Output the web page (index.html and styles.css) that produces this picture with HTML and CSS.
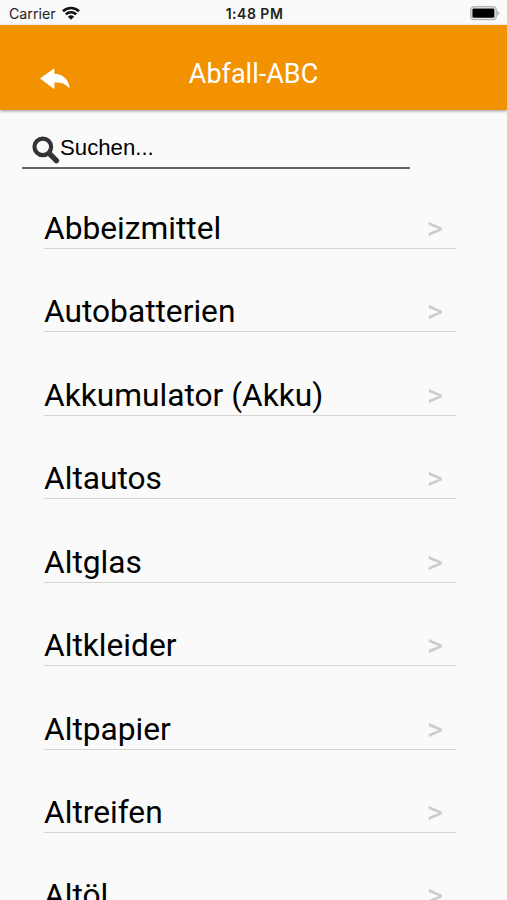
FILE: index.html
```
<!DOCTYPE html>
<html lang="de">
<head>
  <meta charset="UTF-8" />
  <meta name="viewport" content="width=device-width, initial-scale=1.0" />
  <title>Abfall-ABC</title>
  <link rel="stylesheet" href="styles.css">
</head>
<body>
  <div class="statusbar">
    <div class="carrier">
      <span>Carrier</span>
      <svg class="wifi" width="18" height="14" viewBox="0 0 18 14">
        <path d="M1 5.2a11.6 11.6 0 0 1 16 0M3.8 8.4a7.5 7.5 0 0 1 10.4 0" fill="none" stroke="#111" stroke-width="2.6" />
        <path d="M9 13.8L5.9 10.7a4.6 4.6 0 0 1 6.2 0z" fill="#111" />
      </svg>
    </div>
    <span class="time">1:48 PM</span>
    <svg class="battery" width="31" height="15" viewBox="0 0 31 15">
      <rect x="1.8" y="0.8" width="25.4" height="12.8" rx="3.4" fill="#fafafa" stroke="#b5b5b5" stroke-width="1.5" />
      <rect x="3.4" y="2.6" width="22" height="9.2" rx="1.2" fill="#000" />
      <path d="M28.2 4.4l2.6 2.8-2.6 2.8z" fill="#b5b5b5" />
    </svg>
  </div>

  <header>
    <a class="back" href="#" aria-label="Zurück">
      <svg width="32" height="22" viewBox="0 0 32 22">
        <path d="M1 10.5L14.6.8Q15.4.4 15.4 1.4V5.8C23 6 29.5 10.8 30.6 19.4Q30.5 20.6 29.6 19.5C26.2 15.2 21.4 14.2 15.4 14.4V20Q15.4 21.2 14.4 20.6Z" fill="#fff" />
      </svg>
    </a>
    <h1>Abfall-ABC</h1>
  </header>

  <main>
    <div class="search">
      <svg width="28" height="28" viewBox="0 0 28 28">
        <circle cx="10.8" cy="10.9" r="8.3" fill="none" stroke="#333" stroke-width="4.2" />
        <path d="M17.4 17.6l7 7" stroke="#333" stroke-width="5.4" stroke-linecap="round" />
      </svg>
      <span>Suchen...</span>
    </div>

    <ul class="list">
      <li><span>Abbeizmittel</span><span class="arrow">&gt;</span></li>
      <li><span>Autobatterien</span><span class="arrow">&gt;</span></li>
      <li><span>Akkumulator (Akku)</span><span class="arrow">&gt;</span></li>
      <li><span>Altautos</span><span class="arrow">&gt;</span></li>
      <li><span>Altglas</span><span class="arrow">&gt;</span></li>
      <li><span>Altkleider</span><span class="arrow">&gt;</span></li>
      <li><span>Altpapier</span><span class="arrow">&gt;</span></li>
      <li><span>Altreifen</span><span class="arrow">&gt;</span></li>
      <li><span>Altöl</span><span class="arrow">&gt;</span></li>
    </ul>
  </main>
</body>
</html>
```
FILE: styles.css
```
* {
  box-sizing: border-box;
}

body {
  background-color: #fafafa;
  color: #000;
  font-family: Roboto, sans-serif;
  margin: 0;
  height: 900px;
  overflow: hidden;
}

.statusbar {
  display: grid;
  grid-template-columns: 1fr auto 1fr;
  align-items: center;
  height: 25px;
  padding: 2px 7px 0 9px;
  font-family: Inter, sans-serif;
  font-size: 14px;
  line-height: 23px;
  color: #222;
}

.carrier {
  display: flex;
  align-items: center;
  gap: 6px;
}

.carrier span {
  font-size: 14.2px;
}

.wifi {
  margin-bottom: 2px;
}

.time {
  font-size: 14px;
  font-weight: 600;
  letter-spacing: 0.5px;
}

.battery {
  justify-self: end;
}

header {
  display: grid;
  grid-template-columns: 71px 1fr 71px;
  align-items: center;
  height: 85px;
  padding-top: 12px;
  background-color: #f39200;
  box-shadow: 0 1px 3px rgba(0, 0, 0, 0.4);
}

.back {
  display: flex;
  justify-content: flex-end;
  padding-top: 11px;
}

h1 {
  margin: 0;
  color: #fff;
  font-size: 27px;
  font-weight: 400;
  line-height: 32px;
  text-align: center;
}

.search {
  display: flex;
  align-items: flex-start;
  width: 388px;
  height: 59px;
  margin-left: 22px;
  padding: 26px 0 0 10px;
  border-bottom: 2px solid #666;
  font-family: "Liberation Sans", Arial, sans-serif;
  font-size: 22.2px;
  line-height: 24px;
}

.list {
  list-style: none;
  margin: 38.9px 51px 0 44px;
  padding: 0;
}

.list li {
  display: flex;
  justify-content: space-between;
  height: 41px;
  margin-bottom: 42.45px;
  padding-right: 13px;
  border-bottom: 1px solid #d4d4d4;
  font-size: 31.7px;
  line-height: 42px;
}

.arrow {
  color: #ccc;
  font-size: 31px;
}
```
